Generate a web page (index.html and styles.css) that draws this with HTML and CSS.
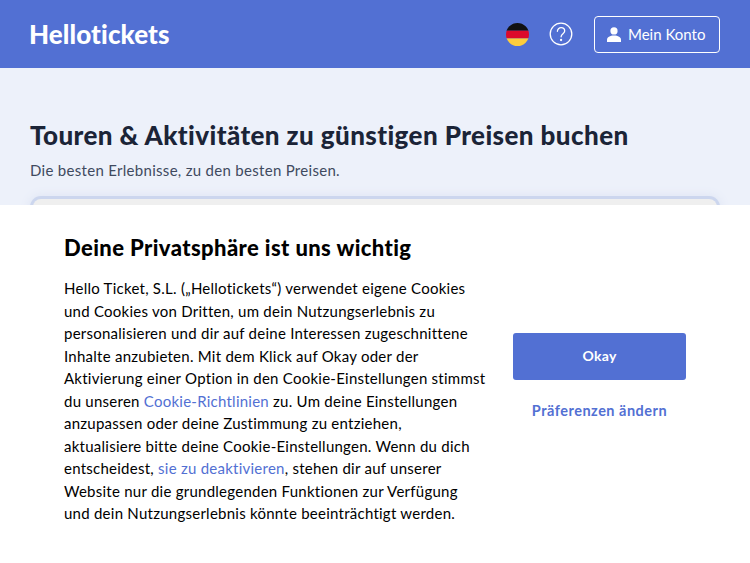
FILE: index.html
```html
<!DOCTYPE html>
<html lang="de">
<head>
<meta charset="utf-8">
<title>Hellotickets</title>
<link rel="stylesheet" href="styles.css">
</head>
<body>
<header class="topbar">
  <a class="logo">Hellotickets</a>
  <div class="actions">
    <svg class="flag" width="23" height="23" viewBox="0 0 23 23"><defs><clipPath id="c"><circle cx="11.5" cy="11.5" r="11.5"/></clipPath></defs><g clip-path="url(#c)"><rect width="23" height="7.7" fill="#111"/><rect y="7.7" width="23" height="7.7" fill="#dd0a2b"/><rect y="15.4" width="23" height="7.6" fill="#fdcd3c"/></g></svg>
    <svg class="help" width="24" height="24" viewBox="0 0 24 24" fill="none" stroke="#fff" stroke-width="1.3" stroke-linecap="round"><circle cx="12" cy="12" r="10.8"/><path d="M8.4 9.3c0-2.2 1.7-3.6 3.7-3.6s3.6 1.4 3.6 3.3c0 2.6-3.6 2.9-3.6 5.8"/><circle cx="12.1" cy="18" r=".5" fill="#fff"/></svg>
    <a class="account">
      <svg width="14" height="15" viewBox="0 0 14 15" fill="#fff"><circle cx="7" cy="3.9" r="3.6"/><path d="M0 15v-2.3C0 10 3 8.400 7 8.400s7 1.600 7 4.300V15z"/></svg>
      <span>Mein Konto</span>
    </a>
  </div>
</header>
<main class="hero">
  <h1>Touren &amp; Aktivitäten zu günstigen Preisen buchen</h1>
  <p>Die besten Erlebnisse, zu den besten Preisen.</p>
  <div class="search"></div>
</main>
<section class="cookie">
  <div class="cookie-text">
    <h2>Deine Privatsphäre ist uns wichtig</h2>
    <p>Hello Ticket, S.L. („Hellotickets“) verwendet eigene Cookies und Cookies von Dritten, um dein Nutzungserlebnis zu personalisieren und dir auf deine Interessen zugeschnittene Inhalte anzubieten. Mit dem Klick auf Okay oder der Aktivierung einer Option in den Cookie-Einstellungen stimmst du unseren <a>Cookie-Richtlinien</a> zu. Um deine Einstellungen anzupassen oder deine Zustimmung zu entziehen,<br>aktualisiere bitte deine Cookie-Einstellungen. Wenn du dich entscheidest, <a>sie zu deaktivieren</a>, stehen dir auf unserer Website nur die grundlegenden Funktionen zur Verfügung und dein Nutzungserlebnis könnte beeinträchtigt werden.</p>
  </div>
  <div class="cookie-actions">
    <button class="okay">Okay</button>
    <button class="prefs">Präferenzen ändern</button>
  </div>
</section>
</body>
</html>
```
FILE: styles.css
```css
* { box-sizing: border-box; }
html, body { margin: 0; height: 563px; overflow: hidden; }
body { font-family: "Lato", "Liberation Sans", sans-serif; background: #edf1fa; position: relative; color: #000; }
.topbar { height: 68px; background: #5270d3; display: flex; align-items: center; justify-content: space-between; padding: 0 30px 0 29px; }
.logo { color: #fff; font-size: 26px; font-weight: 900; letter-spacing: .1px; }
.actions { display: flex; align-items: center; }
.flag { margin-right: 20px; }
.help { margin-right: 21px; }
.account { width: 126px; height: 37px; border: 1px solid #fff; border-radius: 4px; display: flex; align-items: center; gap: 7px; padding-left: 12px; color: #fff; font-size: 15px; }
.hero { padding: 51px 30px 0; }
.hero h1 { margin: 0; font-size: 26px; line-height: 32px; font-weight: 900; color: #1b2437; letter-spacing: .41px; }
.hero p { margin: 9px 0 0; font-size: 15px; line-height: 20px; color: #3f4a60; letter-spacing: .3px; }
.search { margin: 19px 3px 0; height: 60px; background: #efefef; border-radius: 8px; box-shadow: 0 0 0 3px #ccd6ee, 0 0 10px 4px #dfe5f4; }
.cookie { position: absolute; left: 0; right: 0; top: 205px; bottom: 0; background: #fff; display: flex; padding: 29px 64px 0; }
.cookie-text { width: 423px; }
.cookie-text h2 { margin: 0; font-size: 22px; line-height: 28px; font-weight: 900; letter-spacing: .4px; }
.cookie-text p { margin: 15px 0 0; font-size: 15px; line-height: 22.500px; letter-spacing: .25px; }
.cookie-text a { color: #5270d3; }
.cookie-actions { margin-left: 26px; padding-top: 99px; width: 173px; display: flex; flex-direction: column; align-items: center; }
.okay { width: 173px; height: 47px; border: 0; border-radius: 3px; background: #5270d3; color: #fff; font: 700 14px/1 "Lato", sans-serif; letter-spacing: .3px; padding: 0 0 2px; }
.prefs { margin-top: 21px; padding: 0; border: 0; background: none; color: #5270d3; font: 700 14.500px "Lato", sans-serif; letter-spacing: .5px; line-height: 20px; white-space: nowrap; }
```
